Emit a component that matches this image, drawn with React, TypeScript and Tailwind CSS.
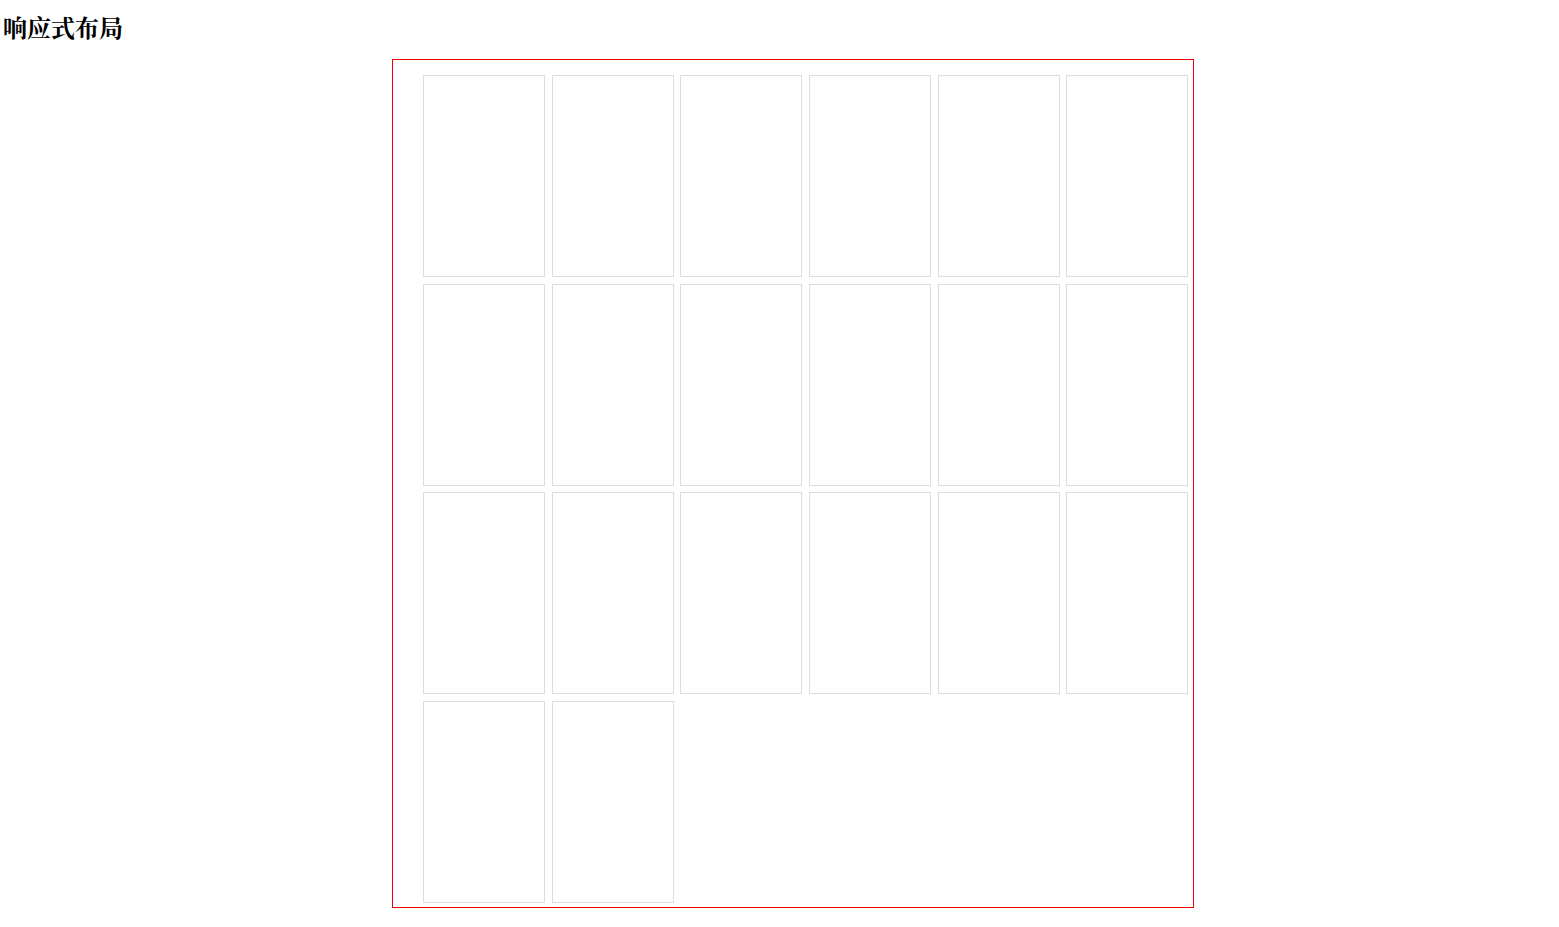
import React from 'react';

const cards = Array.from({ length: 20 }, (_, i) => i);

const App: React.FC = () => {
  return (
    <div className="min-h-screen bg-white text-black">
      <h2 className="pl-[3px] pt-[12px] pb-[17px] text-[24px] leading-[30px] font-bold font-['Noto_Serif_CJK_SC','Liberation_Serif','Noto_Sans_CJK_SC',serif]">
        响应式布局
      </h2>
      <div className="ml-[392px] w-[802px] border border-[#e00] pl-[30px] pr-[5px] pt-[15px] pb-[4px]">
        <div className="grid grid-cols-[repeat(6,122px)] gap-x-[6.7px] gap-y-[6.67px]">
          {cards.map((i) => (
            <div key={i} className="h-[202px] border border-[#ddd] bg-white" />
          ))}
        </div>
      </div>
    </div>
  );
};

export default App;
